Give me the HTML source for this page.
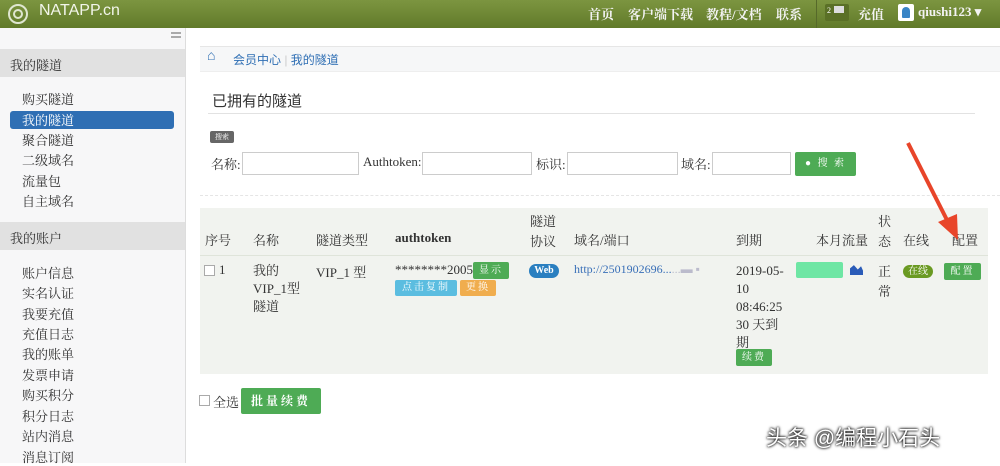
<!DOCTYPE html>
<html><head><meta charset="utf-8"><style>
*{margin:0;padding:0;box-sizing:border-box}
body{width:1000px;height:463px;overflow:hidden;background:#fff;font-family:"Liberation Serif","Noto Serif CJK SC",serif;font-size:13px;color:#333;position:relative}
.a{position:absolute;white-space:nowrap}
.hdr{left:0;top:0;width:1000px;height:28px;background:linear-gradient(#7c9540,#617a2a)}
.side{left:0;top:28px;width:186px;height:435px;background:#f7f7f8;border-right:1px solid #ddd}
.sh{left:0;width:185px;height:28px;background:#e1e1e1;padding:6px 10px;font-size:13px}
.si{left:22px;font-size:13px}
.btn{position:absolute;color:#fff;font-size:10px;text-align:center;border-radius:2px;letter-spacing:2px}
input{position:absolute;height:23px;border:1px solid #ccc;background:#fff}
.th{top:230px;font-size:13px}
</style></head><body>
<div class="a hdr"></div>
<div class="a" style="left:8px;top:4px;width:20px;height:20px;border-radius:50%;border:2px solid #dfe6d0"></div>
<div class="a" style="left:13px;top:9px;width:10px;height:10px;border-radius:50%;border:2px solid #dfe6d0"></div>
<div class="a" style="left:39px;top:2px;color:#f2f5ea;font-family:'Liberation Sans',sans-serif;font-size:16px">NATAPP.cn</div>
<div class="a" style="left:588px;top:4px;color:#f3f3f3;font-size:13px;font-weight:bold">首页</div>
<div class="a" style="left:628px;top:4px;color:#f3f3f3;font-size:13px;font-weight:bold">客户端下载</div>
<div class="a" style="left:706px;top:4px;color:#f3f3f3;font-size:13px;font-weight:bold">教程/文档</div>
<div class="a" style="left:776px;top:4px;color:#f3f3f3;font-size:13px;font-weight:bold">联系</div>
<div class="a" style="left:816px;top:0;width:1px;height:28px;background:#56692a"></div>
<div class="a" style="left:825px;top:4px;width:24px;height:17px;background:#5a7026;border-radius:2px;color:#fff;font-size:8px;padding:2px">2<span style="display:inline-block;width:10px;height:7px;background:#ddd;margin-left:3px"></span></div>
<div class="a" style="left:858px;top:4px;color:#f3f3f3;font-size:13px;font-weight:bold">充值</div>
<div class="a" style="left:898px;top:4px;width:16px;height:17px;background:#fff;border-radius:2px"><div style="margin:3px 4px;width:8px;height:11px;background:#3a85c6;border-radius:4px 4px 1px 1px"></div></div>
<div class="a" style="left:918px;top:4px;color:#f3f3f3;font-size:13px;font-weight:bold">qiushi123 ▾</div>

<div class="a side"></div>
<div class="a" style="left:171px;top:32px;width:10px;height:6px;border-top:2px solid #aaa;border-bottom:2px solid #aaa"></div>
<div class="a sh" style="top:49px">我的隧道</div>
<div class="a si" style="top:89px">购买隧道</div>
<div class="a" style="left:10px;top:111px;width:164px;height:18px;background:#2f6fb4;border-radius:3px"></div>
<div class="a si" style="top:110px;color:#fff">我的隧道</div>
<div class="a si" style="top:130px">聚合隧道</div>
<div class="a si" style="top:150px">二级域名</div>
<div class="a si" style="top:171px">流量包</div>
<div class="a si" style="top:191px">自主域名</div>
<div class="a sh" style="top:222px">我的账户</div>
<div class="a si" style="top:263px">账户信息</div>
<div class="a si" style="top:283px">实名认证</div>
<div class="a si" style="top:304px">我要充值</div>
<div class="a si" style="top:324px">充值日志</div>
<div class="a si" style="top:344px">我的账单</div>
<div class="a si" style="top:365px">发票申请</div>
<div class="a si" style="top:385px">购买积分</div>
<div class="a si" style="top:406px">积分日志</div>
<div class="a si" style="top:426px">站内消息</div>
<div class="a si" style="top:447px">消息订阅</div>

<div class="a" style="left:200px;top:46px;width:800px;height:26px;background:#f6f7f8;border-top:1px solid #e6e6e6;border-bottom:1px solid #eee"></div>
<div class="a" style="left:207px;top:49px;color:#2f6fb4;font-size:14px;font-weight:bold">⌂</div>
<div class="a" style="left:233px;top:51px;color:#2f6fb4;font-size:12px;font-family:'Liberation Sans','Noto Sans CJK SC',sans-serif">会员中心 <span style="color:#ccc">|</span> 我的隧道</div>
<div class="a" style="left:212px;top:90px;font-size:15px;color:#333;font-family:'Liberation Sans','Noto Sans CJK SC',sans-serif">已拥有的隧道</div>
<div class="a" style="left:208px;top:113px;width:767px;height:1px;background:#e2e2e2"></div>
<div class="a" style="left:210px;top:131px;width:24px;height:12px;background:#666;border-radius:2px;color:#fff;font-size:7px;text-align:center;line-height:12px">搜索</div>
<div class="a" style="left:211px;top:154px">名称:</div><input style="left:242px;top:152px;width:117px">
<div class="a" style="left:363px;top:154px">Authtoken:</div><input style="left:422px;top:152px;width:110px">
<div class="a" style="left:536px;top:154px">标识:</div><input style="left:567px;top:152px;width:111px">
<div class="a" style="left:681px;top:154px">域名:</div><input style="left:712px;top:152px;width:79px">
<div class="btn" style="left:795px;top:152px;width:61px;height:24px;background:#4eab55;line-height:24px;font-size:10px">● 搜 索</div>
<div class="a" style="left:200px;top:195px;width:800px;border-top:1px dashed #e5e5e5"></div>

<div class="a" style="left:200px;top:208px;width:788px;height:166px;background:#f1f3ef"></div>
<div class="a" style="left:200px;top:255px;width:788px;height:1px;background:#dfe4da"></div>
<div class="a th" style="left:205px">序号</div>
<div class="a th" style="left:253px">名称</div>
<div class="a th" style="left:316px">隧道类型</div>
<div class="a th" style="left:395px;font-weight:bold">authtoken</div>
<div class="a" style="left:530px;top:212px;line-height:20px">隧道<br>协议</div>
<div class="a th" style="left:574px">域名/端口</div>
<div class="a th" style="left:736px">到期</div>
<div class="a th" style="left:816px">本月流量</div>
<div class="a" style="left:878px;top:212px;line-height:20px">状<br>态</div>
<div class="a th" style="left:903px">在线</div>
<div class="a th" style="left:952px">配置</div>

<div class="a" style="left:204px;top:265px;width:11px;height:11px;border:1px solid #aaa;background:#fff"></div>
<div class="a" style="left:219px;top:262px">1</div>
<div class="a" style="left:253px;top:262px;line-height:18px">我的<br>VIP_1型<br>隧道</div>
<div class="a" style="left:316px;top:262px">VIP_1 型</div>
<div class="a" style="left:395px;top:262px">********2005</div>
<div class="btn" style="left:473px;top:262px;width:36px;height:17px;line-height:17px;background:#4eab55">显示</div>
<div class="btn" style="left:395px;top:280px;width:62px;height:16px;line-height:16px;background:#5bbde0">点击复制</div>
<div class="btn" style="left:460px;top:280px;width:36px;height:16px;line-height:16px;background:#f0ad4e">更换</div>
<div class="btn" style="left:529px;top:264px;width:30px;height:14px;line-height:14px;background:#2a7fc0;border-radius:7px;font-weight:bold;letter-spacing:0">Web</div>
<div class="a" style="left:574px;top:262px;color:#3a70b8;font-size:12px">http://2501902696...<span style="color:#bbc">...▬ ▪</span></div>
<div class="a" style="left:736px;top:262px;line-height:18px">2019-05-<br>10<br>08:46:25<br>30 天到<br>期</div>
<div class="btn" style="left:736px;top:349px;width:36px;height:17px;line-height:17px;background:#4eab55">续费</div>
<div class="a" style="left:796px;top:262px;width:47px;height:16px;background:#6ee6a4;border-radius:2px"></div>
<div class="a" style="left:850px;top:264px;width:13px;height:11px;background:#2a5bb8;clip-path:polygon(0 100%,0 40%,30% 10%,60% 50%,85% 20%,100% 60%,100% 100%)"></div>
<div class="a" style="left:878px;top:262px;line-height:20px">正<br>常</div>
<div class="btn" style="left:903px;top:265px;width:30px;height:13px;line-height:13px;background:#6a9a22;border-radius:7px;letter-spacing:0">在线</div>
<div class="btn" style="left:944px;top:263px;width:37px;height:17px;line-height:17px;background:#4eab55">配置</div>

<div class="a" style="left:199px;top:395px;width:11px;height:11px;border:1px solid #aaa;background:#fff"></div>
<div class="a" style="left:213px;top:392px">全选</div>
<div class="btn" style="left:241px;top:388px;width:80px;height:26px;line-height:26px;background:#4eab55;font-size:12px;font-weight:bold;letter-spacing:3px">批量续费</div>

<svg class="a" style="left:0;top:0" width="1000" height="463">
<line x1="908" y1="143" x2="948" y2="222" stroke="#e8452a" stroke-width="4"/>
<polygon points="938,222 958,240 957,214" fill="#e8452a"/>
</svg>
<div class="a" style="left:766px;top:422px;color:#fff;font-size:21px;font-family:'Liberation Sans','Noto Sans CJK SC',sans-serif;text-shadow:0 0 3px #000,0 0 2px #000">头条 @编程小石头</div>
</body></html>
